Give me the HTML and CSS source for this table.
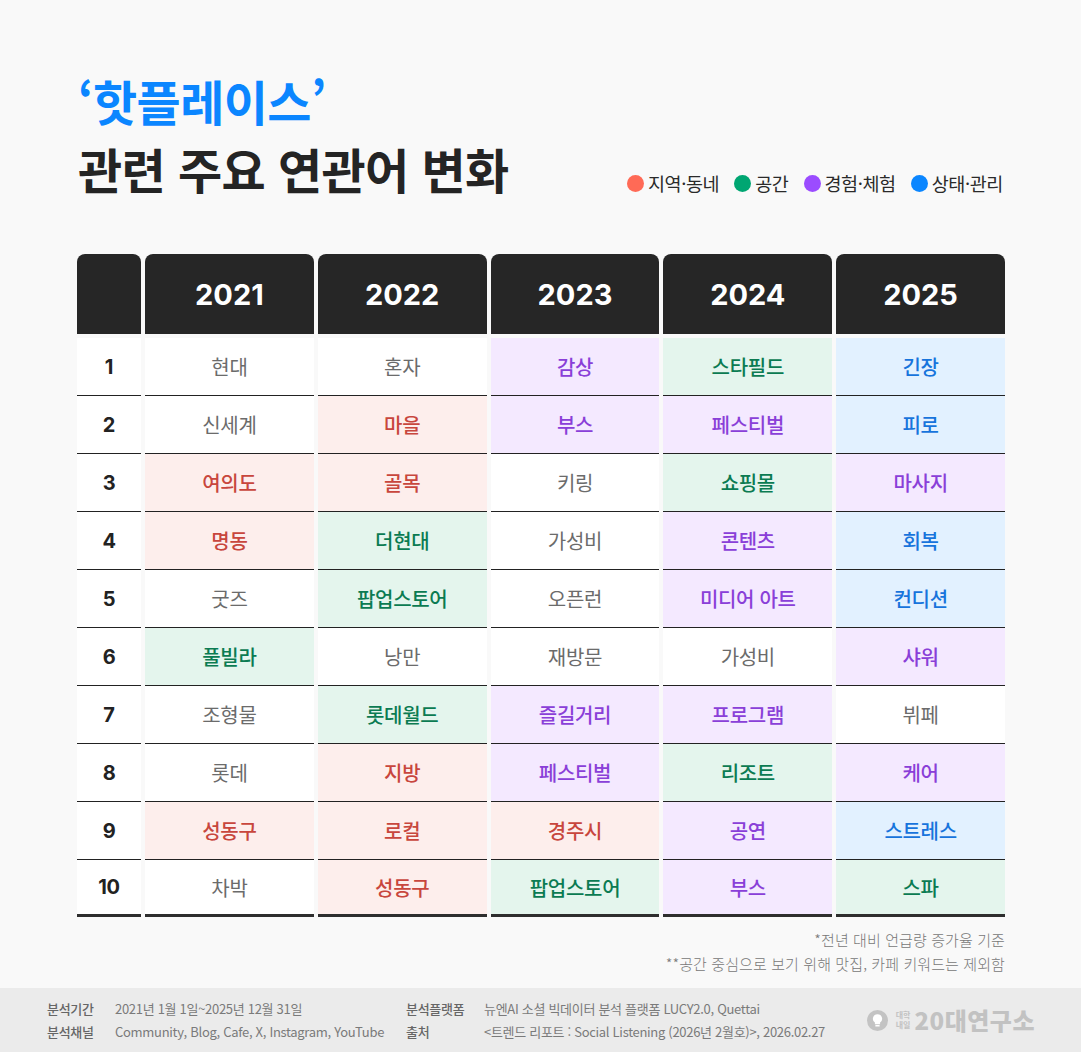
FILE: index.html
```html
<!DOCTYPE html>
<html lang="ko">
<head>
<meta charset="utf-8">
<link rel="stylesheet" href="styles.css">
</head>
<body>
<div class="page">
  <div class="top">
    <h1 class="title"><span class="blue">‘핫플레이스’</span><br>관련 주요 연관어 변화</h1>
    <ul class="legend">
      <li><span class="dot d-red"></span>지역·동네</li>
      <li><span class="dot d-green"></span>공간</li>
      <li><span class="dot d-purple"></span>경험·체험</li>
      <li><span class="dot d-blue"></span>상태·관리</li>
    </ul>
  </div>

  <div class="table">
    <div class="th"></div><div class="th">2021</div><div class="th">2022</div><div class="th">2023</div><div class="th">2024</div><div class="th">2025</div>

    <div class="td num">1</div><div class="td">현대</div><div class="td">혼자</div><div class="td purple">감상</div><div class="td green">스타필드</div><div class="td blue">긴장</div>
    <div class="td num">2</div><div class="td">신세계</div><div class="td red">마을</div><div class="td purple">부스</div><div class="td purple">페스티벌</div><div class="td blue">피로</div>
    <div class="td num">3</div><div class="td red">여의도</div><div class="td red">골목</div><div class="td">키링</div><div class="td green">쇼핑몰</div><div class="td purple">마사지</div>
    <div class="td num">4</div><div class="td red">명동</div><div class="td green">더현대</div><div class="td">가성비</div><div class="td purple">콘텐츠</div><div class="td blue">회복</div>
    <div class="td num">5</div><div class="td">굿즈</div><div class="td green">팝업스토어</div><div class="td">오픈런</div><div class="td purple">미디어 아트</div><div class="td blue">컨디션</div>
    <div class="td num">6</div><div class="td green">풀빌라</div><div class="td">낭만</div><div class="td">재방문</div><div class="td">가성비</div><div class="td purple">샤워</div>
    <div class="td num">7</div><div class="td">조형물</div><div class="td green">롯데월드</div><div class="td purple">즐길거리</div><div class="td purple">프로그램</div><div class="td">뷔페</div>
    <div class="td num">8</div><div class="td">롯데</div><div class="td red">지방</div><div class="td purple">페스티벌</div><div class="td green">리조트</div><div class="td purple">케어</div>
    <div class="td num">9</div><div class="td red">성동구</div><div class="td red">로컬</div><div class="td red">경주시</div><div class="td purple">공연</div><div class="td blue">스트레스</div>
    <div class="td num last">10</div><div class="td last">차박</div><div class="td red last">성동구</div><div class="td green last">팝업스토어</div><div class="td purple last">부스</div><div class="td green last">스파</div>
  </div>

  <div class="notes">
    <p>*전년 대비 언급량 증가율 기준</p>
    <p>**공간 중심으로 보기 위해 맛집, 카페 키워드는 제외함</p>
  </div>
</div>

<footer class="footer">
  <div class="info">
    <span class="lbl">분석기간</span><span class="val">2021년 1월 1일~2025년 12월 31일</span>
    <span class="lbl">분석플랫폼</span><span class="val">뉴엔AI 소셜 빅데이터 분석 플랫폼 LUCY2.0, Quettai</span>
    <span class="lbl">분석채널</span><span class="val">Community, Blog, Cafe, X, Instagram, YouTube</span>
    <span class="lbl">출처</span><span class="val">&lt;트렌드 리포트 : Social Listening (2026년 2월호)&gt;, 2026.02.27</span>
  </div>
  <div class="logo">
    <svg class="bulb" width="21" height="21" viewBox="0 0 21 21">
      <circle cx="10.5" cy="10.5" r="10.5" fill="#c3c3c3"/>
      <path d="M10.5 4.2a4.6 4.6 0 0 0-2.6 8.4v1.6h5.2v-1.6a4.6 4.6 0 0 0-2.6-8.4z" fill="#fff"/>
      <rect x="8.3" y="15" width="4.4" height="1.6" rx="0.6" fill="#fff"/>
    </svg>
    <span class="small"><span>대학</span><span>내일</span></span>
    <span class="brand">20대연구소</span>
  </div>
</footer>
</body>
</html>
```

FILE: styles.css
```css
* { box-sizing: border-box; }
html, body { margin: 0; padding: 0; }
body {
  width: 1081px;
  height: 1052px;
  overflow: hidden;
  background: #f9f9f9;
  font-family: "Noto Sans CJK KR", "Noto Sans", sans-serif;
  color: #222;
}
.page { padding: 66px 76px 0 77px; }

.top {
  display: flex;
  justify-content: space-between;
  align-items: flex-end;
}
.title {
  margin: 0 0 0 1px;
  font-size: 48px;
  line-height: 68px;
  font-weight: 700;
  letter-spacing: -0.6px;
  color: #242424;
}
.blue { color: #0b86ff; }

.legend {
  list-style: none;
  margin: 0 2px 7px 0;
  padding: 0;
  display: flex;
  gap: 15px;
  font-size: 18.5px;
  line-height: 24px;
  letter-spacing: -0.4px;
  color: #2a2a2a;
}
.legend li { display: flex; align-items: center; gap: 4px; }
.dot { width: 17px; height: 17px; border-radius: 50%; display: inline-block; }
.d-red { background: #ff6a56; }
.d-green { background: #00a672; }
.d-purple { background: #9b4cff; }
.d-blue { background: #0b86ff; }

.table {
  margin-top: 52px;
  display: grid;
  grid-template-columns: 64px repeat(5, 1fr);
  column-gap: 4px;
}
.th {
  height: 80px;
  margin-bottom: 4px;
  background: #262626;
  border-radius: 8px 8px 0 0;
  color: #fff;
  font-family: Inter, "Noto Sans", sans-serif;
  font-weight: 700;
  font-size: 29px;
  display: flex;
  align-items: center;
  justify-content: center;
}
.td {
  height: 58px;
  border-bottom: 1px solid #222;
  background: #fff;
  display: flex;
  align-items: center;
  justify-content: center;
  font-size: 20px;
  color: #6b6b6b;
  letter-spacing: -0.3px;
}
.td.last { height: 57px; border-bottom: 3px solid #2e2e2e; }
.num {
  font-family: Inter, "Noto Sans", sans-serif;
  font-weight: 700;
  font-size: 20px;
  color: #222;
}
.red { background: #fdeeec; color: #c8463d; font-weight: 500; }
.green { background: #e4f5ed; color: #0b7b52; font-weight: 500; }
.purple { background: #f4e9ff; color: #8a3fd8; font-weight: 500; }
.blue.td { background: #e2f1ff; color: #1774dc; font-weight: 500; }

.notes {
  margin-top: 11px;
  text-align: right;
  font-size: 15px;
  line-height: 24px;
  color: #777;
  letter-spacing: 0.1px;
  font-weight: 300;
}
.notes p { margin: 0; }

.footer {
  margin-top: 12px;
  height: 64px;
  background: #ebebeb;
  display: flex;
  justify-content: space-between;
  align-items: flex-start;
  padding: 9px 46px 0 47px;
}
.info {
  display: grid;
  grid-template-columns: 68px 291px 78px auto;
  font-size: 13px;
  line-height: 23px;
  letter-spacing: -0.3px;
}
.lbl { color: #666; font-weight: 500; }
.val { color: #7a7a7a; }

.logo {
  display: flex;
  align-items: center;
  gap: 4px;
  margin-top: 10px;
  color: #c2c2c2;
}
.bulb { margin-right: 4px; }
.small {
  display: flex;
  flex-direction: column;
  font-size: 8px;
  line-height: 10px;
  font-weight: 700;
  color: #c2c2c2;
}
.brand {
  font-size: 24px;
  line-height: 26px;
  font-weight: 900;
  letter-spacing: 0.5px;
  color: #c2c2c2;
}
```
